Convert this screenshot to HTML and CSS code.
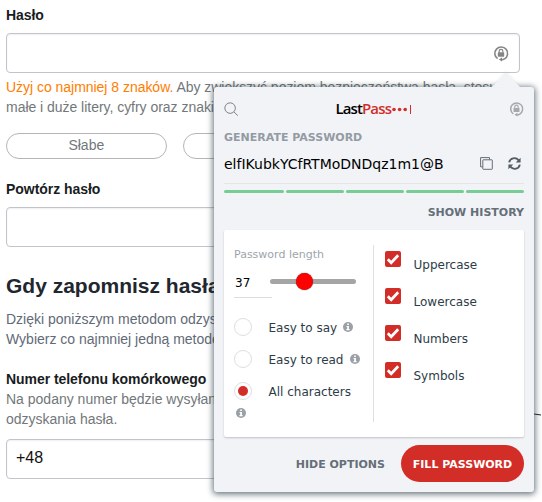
FILE: index.html
```html
<!DOCTYPE html>
<html lang="pl">
<head>
<meta charset="utf-8">
<title>Hasło</title>
<link rel="stylesheet" href="styles.css">
</head>
<body>
<svg width="0" height="0" class="defs">
  <symbol id="lock" viewBox="0 0 16 16">
    <path d="M4.6 13.2A6.4 6.4 0 1 1 11.5 13.4Q10 14.3 8.4 14.2" fill="none" stroke="currentColor" stroke-width="1.6"/>
    <path d="M9 11.9v4.1L5.8 14z" fill="currentColor"/>
    <rect x="4.8" y="6.8" width="6.4" height="4.4" rx=".6" fill="currentColor"/>
    <path d="M6.2 7V5.6a1.8 1.8 0 0 1 3.6 0V7" fill="none" stroke="currentColor" stroke-width="1.2"/>
  </symbol>
  <symbol id="info" viewBox="0 0 10 10">
    <circle cx="5" cy="5" r="5" fill="#9aa0a5"/>
    <path d="M4.2 1.4h1.7v1.5H4.2zM3.5 3.9h2.4v3.2h.7v1.2H3.4V7.1h.8v-2h-.7z" fill="#fff"/>
  </symbol>
  <symbol id="check" viewBox="0 0 16 16">
    <path d="M2.8 8.2l3.4 3.5 7-7.4" fill="none" stroke="#fff" stroke-width="2.8"/>
  </symbol>
</svg>
<main class="page">
  <div class="label">Hasło</div>
  <div class="input first"><svg class="lock"><use href="#lock"/></svg></div>
  <p class="hint"><span class="warn">Użyj co najmniej 8 znaków.</span> Aby zwiększyć poziom bezpieczeństwa hasła, stosuj<br>małe i duże litery, cyfry oraz znaki</p>
  <div class="pills"><span>Słabe</span><span></span><span></span></div>
  <div class="label repeat">Powtórz hasło</div>
  <div class="input"></div>
  <h2>Gdy zapomnisz hasła</h2>
  <p class="intro">Dzięki poniższym metodom odzys<br>Wybierz co najmniej jedną metodę</p>
  <div class="label phone">Numer telefonu komórkowego</div>
  <p class="note">Na podany numer będzie wysyłan<br>odzyskania hasła.</p>
  <div class="input tel">+48</div>
  <p class="intro next">Podaj i przeczytaj</p>
</main>
<svg class="stroke" viewBox="0 0 8 3"><path d="M0 1l7 1" stroke="#222" fill="none"/></svg>
<section class="popup">
  <svg class="arrow" viewBox="0 0 28 15"><path d="M0 15L14 .5 28 15z" fill="#f2f3f7"/></svg>
  <header>
    <svg class="search" viewBox="0 0 16 16"><circle cx="6.5" cy="6.5" r="5.6"/><path d="M10.6 10.6l4.2 4"/></svg>
    <div class="logo"><b>Last</b><span>Pass</span><svg viewBox="0 0 20 10"><circle cx="2" cy="5.5" r="1.8"/><circle cx="7.6" cy="5.5" r="1.8"/><circle cx="13.2" cy="5.5" r="1.8"/><rect x="18" y="1" width="1" height="9"/></svg></div>
    <svg class="lock"><use href="#lock"/></svg>
  </header>
  <h3>GENERATE PASSWORD</h3>
  <div class="password">
    <span class="value">elfIKubkYCfRTMoDNDqz1m1@B</span>
    <svg class="copy" viewBox="0 0 13 13"><path d="M9.5 2.5V.6H.6v9.2h2"/><rect x="2.8" y="2.8" width="9.5" height="9.5" rx=".5"/></svg>
    <svg class="refresh" viewBox="0 0 13 13"><path d="M1.2 5.4C2 .9 7.7-.3 10.7 3.3M11.8 7.6C11 12.1 5.3 13.3 2.3 9.7"/><path class="tip" d="M12.6.7v4.9H7.7zM.4 12.3V7.4h4.9z"/></svg>
  </div>
  <div class="meter"><i></i><i></i><i></i><i></i><i></i></div>
  <div class="history">SHOW HISTORY</div>
  <div class="options">
    <div class="left">
      <div class="caption">Password length</div>
      <div class="length"><span class="num">37</span><span class="track"><i></i></span></div>
      <div class="radio"><i></i><span>Easy to say</span><svg class="info"><use href="#info"/></svg></div>
      <div class="radio"><i></i><span>Easy to read</span><svg class="info"><use href="#info"/></svg></div>
      <div class="radio on"><i></i><span>All characters</span></div>
      <svg class="info below"><use href="#info"/></svg>
    </div>
    <div class="right">
      <div class="check"><svg><use href="#check"/></svg><span>Uppercase</span></div>
      <div class="check"><svg><use href="#check"/></svg><span>Lowercase</span></div>
      <div class="check"><svg><use href="#check"/></svg><span>Numbers</span></div>
      <div class="check"><svg><use href="#check"/></svg><span>Symbols</span></div>
    </div>
  </div>
  <footer><span>HIDE OPTIONS</span><button>FILL PASSWORD</button></footer>
</section>
</body>
</html>
```
FILE: styles.css
```css
* { box-sizing: border-box; }
html, body { height: 502px; overflow: hidden; }
body { margin: 0; background: #fff; position: relative; font: 14px/20px "Liberation Sans", Arial, sans-serif; color: #72777a; }
p, h2, h3 { margin: 0; white-space: nowrap; }
.defs { position: absolute; }
.page { width: 526px; padding: 5px 6px 0; }
.label { font-weight: bold; color: #191c22; letter-spacing: -.05px; }
.input { height: 40px; border: 1px solid #c1c4ca; border-radius: 4px; box-shadow: inset 0 1px 2px #0001; }
.first { margin-top: 8px; display: flex; justify-content: flex-end; align-items: center; padding-right: 10px; }
.lock { width: 16px; height: 17px; color: #858585; }
.hint { margin-top: 4px; letter-spacing: -.03px; }
.warn { color: #ff7d00; }
.pills { display: flex; gap: 16px; margin-top: 16px; }
.pills span { flex: 1; height: 26px; border: 1px solid #b5b5b5; border-radius: 13px; text-align: center; line-height: 22px; }
.repeat { margin: 20px 0 8px; }
h2 { font-size: 21px; line-height: 28px; color: #22262e; margin-top: 25px; }
.intro { color: #626a76; margin-top: 9px; }
.phone { margin-top: 20px; }
.tel { margin-top: 10px; padding-left: 9px; font-size: 16px; line-height: 36px; color: #111; }
.next { margin-top: 19px; }
.stroke { position: absolute; left: 534px; top: 413px; width: 8px; height: 3px; }

.popup { position: absolute; left: 214px; top: 87px; width: 320px; height: 405px; padding: 12px 10px 0; background: #f2f3f7; border-radius: 3px; box-shadow: 0 1px 6px 1px #223540b5; font-family: "DejaVu Sans", sans-serif; }
.arrow { position: absolute; left: 278px; top: -15px; width: 28px; height: 15px; filter: drop-shadow(0 -1px 1px #0001); }
header { display: flex; justify-content: space-between; align-items: center; height: 20px; }
.search { width: 15px; height: 15px; fill: none; stroke: #777b80; stroke-width: 1; }
header .lock { width: 15px; height: 16px; color: #a5a8ac; }
.logo { display: flex; align-items: center; margin-top: -2px; font: 600 15px/18px "Open Sans", sans-serif; letter-spacing: -.95px; color: #d32d27; }
.logo b { color: #000; font-weight: 600; }
.logo span { letter-spacing: -.75px; }
.logo svg { width: 20px; height: 10px; fill: #d32d27; margin: 2px 0 0 1px; }
h3 { margin-top: 11px; font-size: 11px; line-height: 16px; color: #929ba3; }
.password { display: flex; align-items: center; height: 38px; border-bottom: 1px solid #e3e5e9; padding-bottom: 2px; }
.value { width: 220px; overflow: hidden; white-space: nowrap; font-size: 14px; color: #000; }
.copy { width: 13px; height: 13px; margin-left: 36px; fill: none; stroke: #666d73; }
.refresh { width: 13px; height: 13px; margin-left: 15px; fill: none; stroke: #555e65; stroke-width: 1.9; }
.refresh .tip { fill: #555e65; stroke: none; }
.meter { display: flex; gap: 2px; margin-top: 6px; }
.meter i { width: 58px; height: 3px; border-radius: 2px; background: #78cd96; }
.meter i:first-child { width: 60px; }
.history { text-align: right; font-size: 11px; font-weight: bold; color: #656f77; line-height: 16px; margin-top: 12px; }
.options { display: flex; height: 207px; margin-top: 9px; padding: 15px 0; background: #fff; border-radius: 2px; box-shadow: 0 1px 2px #0003; font-size: 12px; color: #2e3c47; }
.left { width: 150px; height: 177px; border-right: 1px solid #dddfe2; padding-left: 10px; }
.caption { font-size: 11px; line-height: 20px; height: 18px; color: #9da5ab; }
.length { display: flex; align-items: center; height: 35px; margin-bottom: 13px; padding-top: 1px; }
.num { width: 38px; height: 34px; padding-left: 1px; line-height: 38px; border-bottom: 1px solid #dedede; font-size: 12px; color: #000; }
.track { width: 86px; height: 5px; margin: 1px 0 0 -2px; border-radius: 3px; background: #a5a5a5; display: flex; align-items: center; }
.track i { width: 17px; height: 17px; margin-left: 26px; border-radius: 50%; background: red; box-shadow: 0 0 1px #333; }
.radio { display: flex; align-items: center; height: 32px; white-space: nowrap; }
.radio > i { width: 18px; height: 18px; margin-right: 16.5px; border: 1px solid #dedfe1; border-radius: 50%; display: flex; }
.radio span { padding-top: 2px; }
.radio.on > i::after { content: ""; width: 10px; height: 10px; margin: auto; flex: none; border-radius: 50%; background: #d32d27; }
.info { width: 10px; height: 10px; margin-left: 6px; }
.below { display: block; margin: 1px 0 0 2px; }
.right { padding: 5px 0 0 11px; }
.check { display: flex; height: 37px; }
.check svg { width: 16px; height: 16px; background: #d32d27; border-radius: 2px; margin: 1px 12.5px 0 0; }
.check span { line-height: 30px; }
footer { display: flex; justify-content: flex-end; align-items: center; gap: 16px; margin-top: 8px; font-size: 11px; font-weight: bold; color: #656f77; }
footer span { padding-top: 2px; }
button { width: 123px; height: 37px; padding: 1px 0 0; border: 0; border-radius: 19px; background: #d32d27; color: #fff; font: bold 11px "DejaVu Sans", sans-serif; }
```
